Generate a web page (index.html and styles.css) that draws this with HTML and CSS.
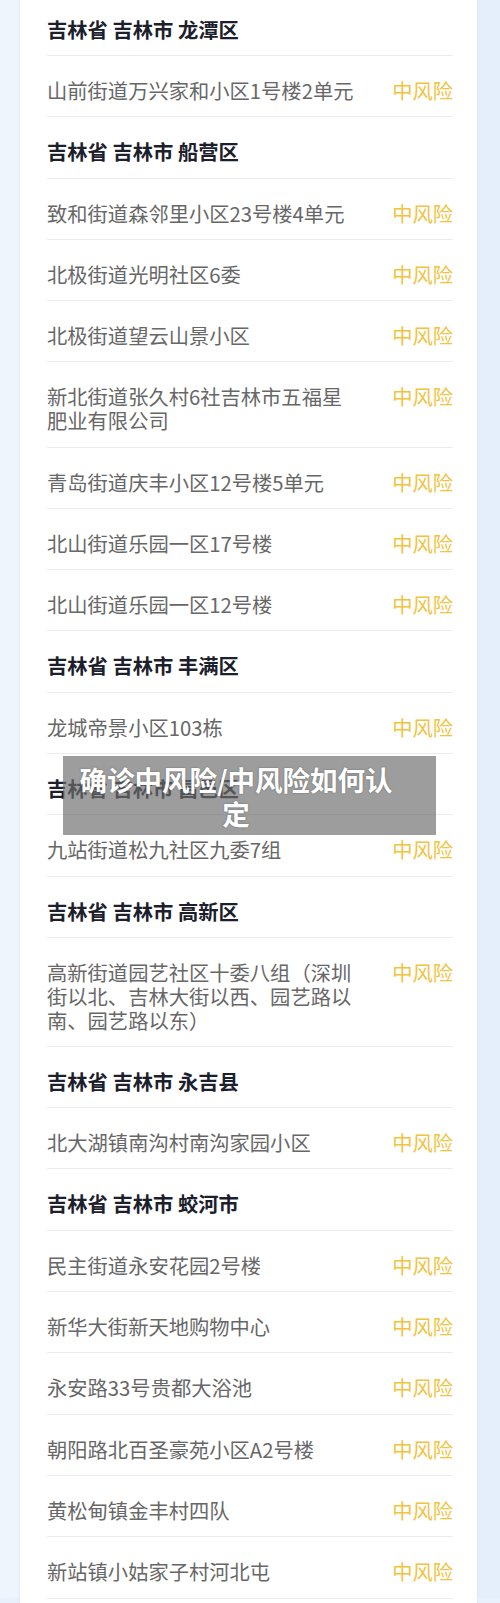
FILE: index.html
```html
<!DOCTYPE html>
<html lang="zh-CN">
<head>
  <meta charset="UTF-8">
  <meta name="viewport" content="width=device-width, initial-scale=1.0">
  <title>确诊中风险/中风险如何认定</title>
  <link rel="stylesheet" href="styles.css">
</head>
<body>
  <main class="page">
    <section class="risk-card">
      <ul class="risk-list">
        <li class="area">吉林省 吉林市 龙潭区</li>
        <li class="spot"><span class="name">山前街道万兴家和小区1号楼2单元</span><span class="level">中风险</span></li>

        <li class="area">吉林省 吉林市 船营区</li>
        <li class="spot"><span class="name">致和街道森邻里小区23号楼4单元</span><span class="level">中风险</span></li>
        <li class="spot"><span class="name">北极街道光明社区6委</span><span class="level">中风险</span></li>
        <li class="spot"><span class="name">北极街道望云山景小区</span><span class="level">中风险</span></li>
        <li class="spot"><span class="name">新北街道张久村6社吉林市五福星肥业有限公司</span><span class="level">中风险</span></li>
        <li class="spot"><span class="name">青岛街道庆丰小区12号楼5单元</span><span class="level">中风险</span></li>
        <li class="spot"><span class="name">北山街道乐园一区17号楼</span><span class="level">中风险</span></li>
        <li class="spot"><span class="name">北山街道乐园一区12号楼</span><span class="level">中风险</span></li>

        <li class="area">吉林省 吉林市 丰满区</li>
        <li class="spot"><span class="name">龙城帝景小区103栋</span><span class="level">中风险</span></li>

        <li class="area">吉林省 吉林市 昌邑区</li>
        <li class="spot"><span class="name">九站街道松九社区九委7组</span><span class="level">中风险</span></li>

        <li class="area">吉林省 吉林市 高新区</li>
        <li class="spot"><span class="name">高新街道园艺社区十委八组（深圳街以北、吉林大街以西、园艺路以南、园艺路以东）</span><span class="level">中风险</span></li>

        <li class="area">吉林省 吉林市 永吉县</li>
        <li class="spot"><span class="name">北大湖镇南沟村南沟家园小区</span><span class="level">中风险</span></li>

        <li class="area">吉林省 吉林市 蛟河市</li>
        <li class="spot"><span class="name">民主街道永安花园2号楼</span><span class="level">中风险</span></li>
        <li class="spot"><span class="name">新华大街新天地购物中心</span><span class="level">中风险</span></li>
        <li class="spot"><span class="name">永安路33号贵都大浴池</span><span class="level">中风险</span></li>
        <li class="spot"><span class="name">朝阳路北百圣豪苑小区A2号楼</span><span class="level">中风险</span></li>
        <li class="spot"><span class="name">黄松甸镇金丰村四队</span><span class="level">中风险</span></li>
        <li class="spot"><span class="name">新站镇小姑家子村河北屯</span><span class="level">中风险</span></li>
        <li class="spot"><span class="name">&nbsp;</span><span class="level">&nbsp;</span></li>
      </ul>
    </section>

    <h1 class="caption">确诊中风险/中风险如何认定</h1>
  </main>
</body>
</html>
```

FILE: styles.css
```css
* {
  box-sizing: border-box;
  margin: 0;
  padding: 0;
}

html,
body {
  height: 100%;
  overflow: hidden;
}

body {
  background-color: #e9f2fc;
  font-family: "Noto Sans CJK SC", "Noto Sans", sans-serif;
}

.page {
  position: relative;
  height: 1603px;
  padding: 0 23px 0 20px;
  background: linear-gradient(to right, #eef5fd 0, #e8f1fb 50%, #e5effb 100%);
}

.risk-card {
  margin-top: -5.3px;
  background-color: #fff;
  box-shadow: 0 0 3px rgba(120, 150, 190, 0.15);
}

.risk-list {
  list-style: none;
  padding: 0 24px 0 27px;
}

.risk-list > li {
  padding: 23px 0 13.5px;
  line-height: 23.8px;
  font-size: 20.3px;
  border-bottom: 1px solid #ececec;
}

.area {
  font-weight: 700;
  color: #1b202c;
}

.spot {
  display: flex;
  align-items: flex-start;
  color: #676767;
}

.spot .name {
  flex: 0 0 312px;
}

.spot .level {
  margin-left: auto;
  color: #f1c33f;
}

.caption {
  position: absolute;
  top: 761px;
  left: 63px;
  width: 373px;
  height: 79px;
  padding: 6px 41px 0 14px;
  background-color: rgba(110, 110, 110, 0.68);
  color: #fff;
  font-size: 27.5px;
  font-weight: 700;
  line-height: 34px;
  text-align: center;
  text-shadow: 0 0 2px rgba(0, 0, 0, 0.35);
}
```
